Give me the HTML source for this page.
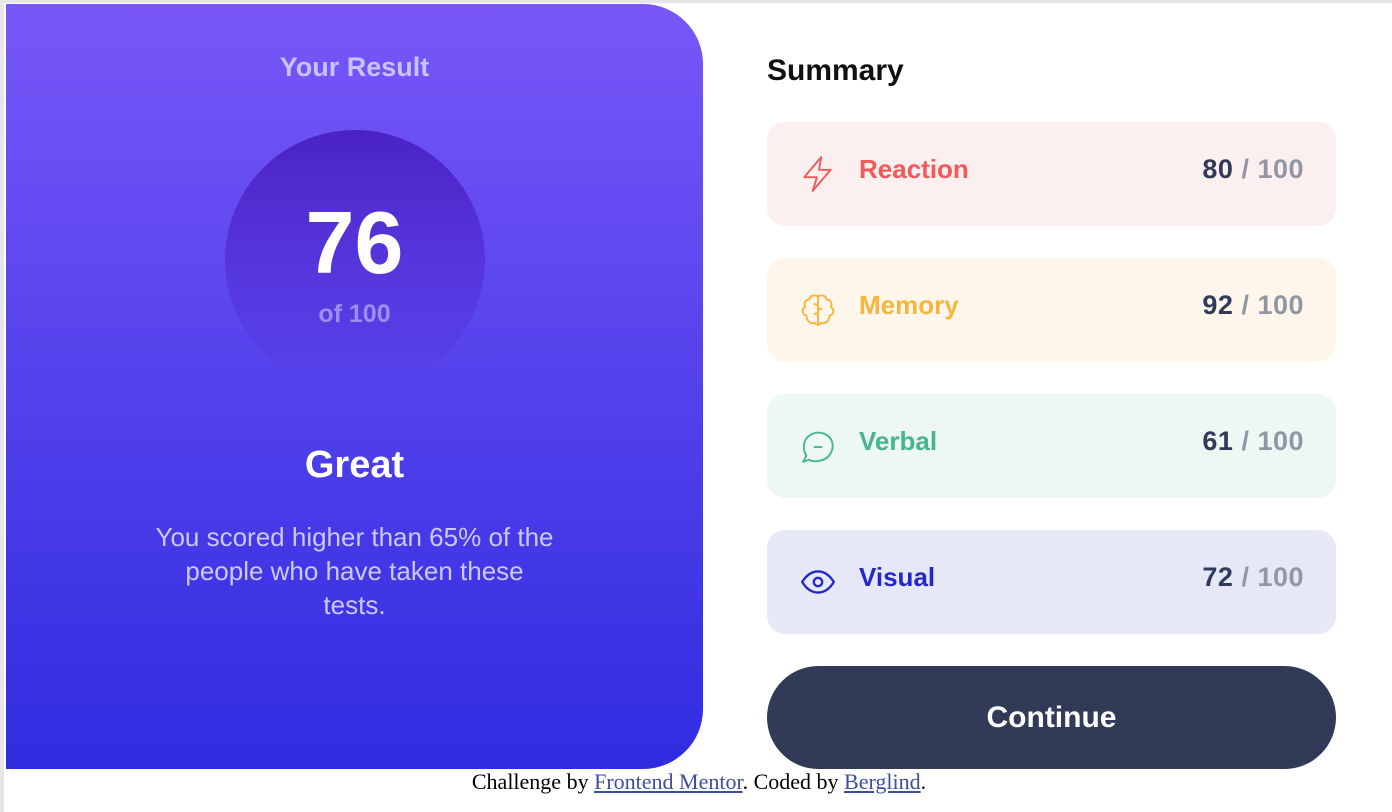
<!DOCTYPE html>
<html><head><meta charset="utf-8"><style>
html,body{margin:0;padding:0;background:#fff;width:1392px;height:812px;overflow:hidden}
body{position:relative;font-family:"Liberation Sans",sans-serif}
.topbar{position:absolute;left:0;top:0;width:1392px;height:3px;background:#e6e6ea}
.leftbar{position:absolute;left:0;top:0;width:4px;height:812px;background:#e6e6ea}
.card{position:absolute;left:6px;top:4px;width:697px;height:765px;border-radius:0 60px 60px 0;background:linear-gradient(#7857f8,#2f2ce0);text-align:center;color:#fff}
.yr{position:absolute;top:48px;left:0;right:0;font-size:27px;font-weight:bold;color:#c8c3ff}
.circle{position:absolute;left:219px;top:126px;width:260px;height:260px;border-radius:50%;background:linear-gradient(#4a22c6,rgba(74,44,230,0) 100%)}
.num{position:absolute;top:188px;left:0;right:0;font-size:88px;font-weight:bold}
.of{position:absolute;top:296px;left:0;right:0;font-size:25px;font-weight:bold;color:#9b90f0}
.great{position:absolute;top:440px;left:0;right:0;font-size:38px;font-weight:bold}
.desc{position:absolute;top:516px;left:0;right:0;font-size:26px;line-height:34px;color:#cdc8ff}
.sum{position:absolute;left:767px;top:54px;font-size:30px;font-weight:bold;color:#111}
.row{position:absolute;left:767px;width:569px;height:104px;border-radius:18px}
.row svg{position:absolute;left:32px;top:33px}
.row .l{position:absolute;left:92px;top:32px;font-size:26px;font-weight:bold}
.row .r{position:absolute;right:32px;top:32px;font-size:27px;font-weight:bold;color:#303b59;letter-spacing:0.5px}
.row .r span{color:#9196a5}
.btn{position:absolute;left:767px;top:666px;width:569px;height:103px;border-radius:52px;background:#313a56;color:#fff;font-size:30px;font-weight:bold;text-align:center;line-height:103px}
.foot{position:absolute;top:769px;left:6px;right:0;text-align:center;font-family:"Liberation Serif",serif;font-size:22px;color:#000}
.foot a{color:#3e4e9c}
</style></head><body>
<div class="topbar"></div><div class="leftbar"></div>
<div class="card">
<div class="yr">Your Result</div>
<div class="circle"></div>
<div class="num">76</div>
<div class="of">of 100</div>
<div class="great">Great</div>
<div class="desc">You scored higher than 65% of the<br>people who have taken these<br>tests.</div>
</div>
<div class="sum">Summary</div>
<div class="row" style="top:122px;background:#fcefef"><svg width="38" height="38" viewBox="0 0 36 36" fill="none" stroke="#f05a5a" stroke-width="1.8" stroke-linejoin="round"><path d="M21 2 L5 21 H17 L13 34 L30 14 H19 Z"/></svg><div class="l" style="color:#f05a5a">Reaction</div><div class="r">80 <span>/ 100</span></div></div>
<div class="row" style="top:258px;background:#fef6eb"><svg width="38" height="38" viewBox="0 0 36 36" fill="none" stroke="#f4b63d" stroke-width="1.8" stroke-linejoin="round"><path d="M18 5 V32 M18 5 C14 3 10 5 10 8 C6 8 4 12 6 15 C2 17 3 23 7 23 C7 28 11 32 15 30 C16 32 18 32 18 32 C18 32 20 32 21 30 C25 32 29 28 29 23 C33 23 34 17 30 15 C32 12 30 8 26 8 C26 5 22 3 18 5 Z M18 17 H22 M14 12 L18 14 M14 22 L18 21"/></svg><div class="l" style="color:#f4b63d">Memory</div><div class="r">92 <span>/ 100</span></div></div>
<div class="row" style="top:394px;background:#edf7f3"><svg width="38" height="38" viewBox="0 0 36 36" fill="none" stroke="#47b68d" stroke-width="1.8" stroke-linejoin="round"><path d="M4 33 L7 27 C3 21 4 12 10 8 C17 3 27 5 31 13 C34 21 29 31 19 32 C15 33 11 32 9 31 Z M14 19 H22"/></svg><div class="l" style="color:#47b68d">Verbal</div><div class="r">61 <span>/ 100</span></div></div>
<div class="row" style="top:530px;background:#e7e8f7"><svg width="38" height="38" viewBox="0 0 36 36" fill="none" stroke="#2328c8" stroke-width="2.2"><path d="M3 18 C8 10 13 8 18 8 C23 8 28 10 33 18 C28 26 23 28 18 28 C13 28 8 26 3 18 Z"/><circle cx="18" cy="18" r="4"/></svg><div class="l" style="color:#2328c8">Visual</div><div class="r">72 <span>/ 100</span></div></div>
<div class="btn">Continue</div>
<div class="foot">Challenge by <a href="#">Frontend Mentor</a>. Coded by <a href="#">Berglind</a>.</div>
</body></html>
